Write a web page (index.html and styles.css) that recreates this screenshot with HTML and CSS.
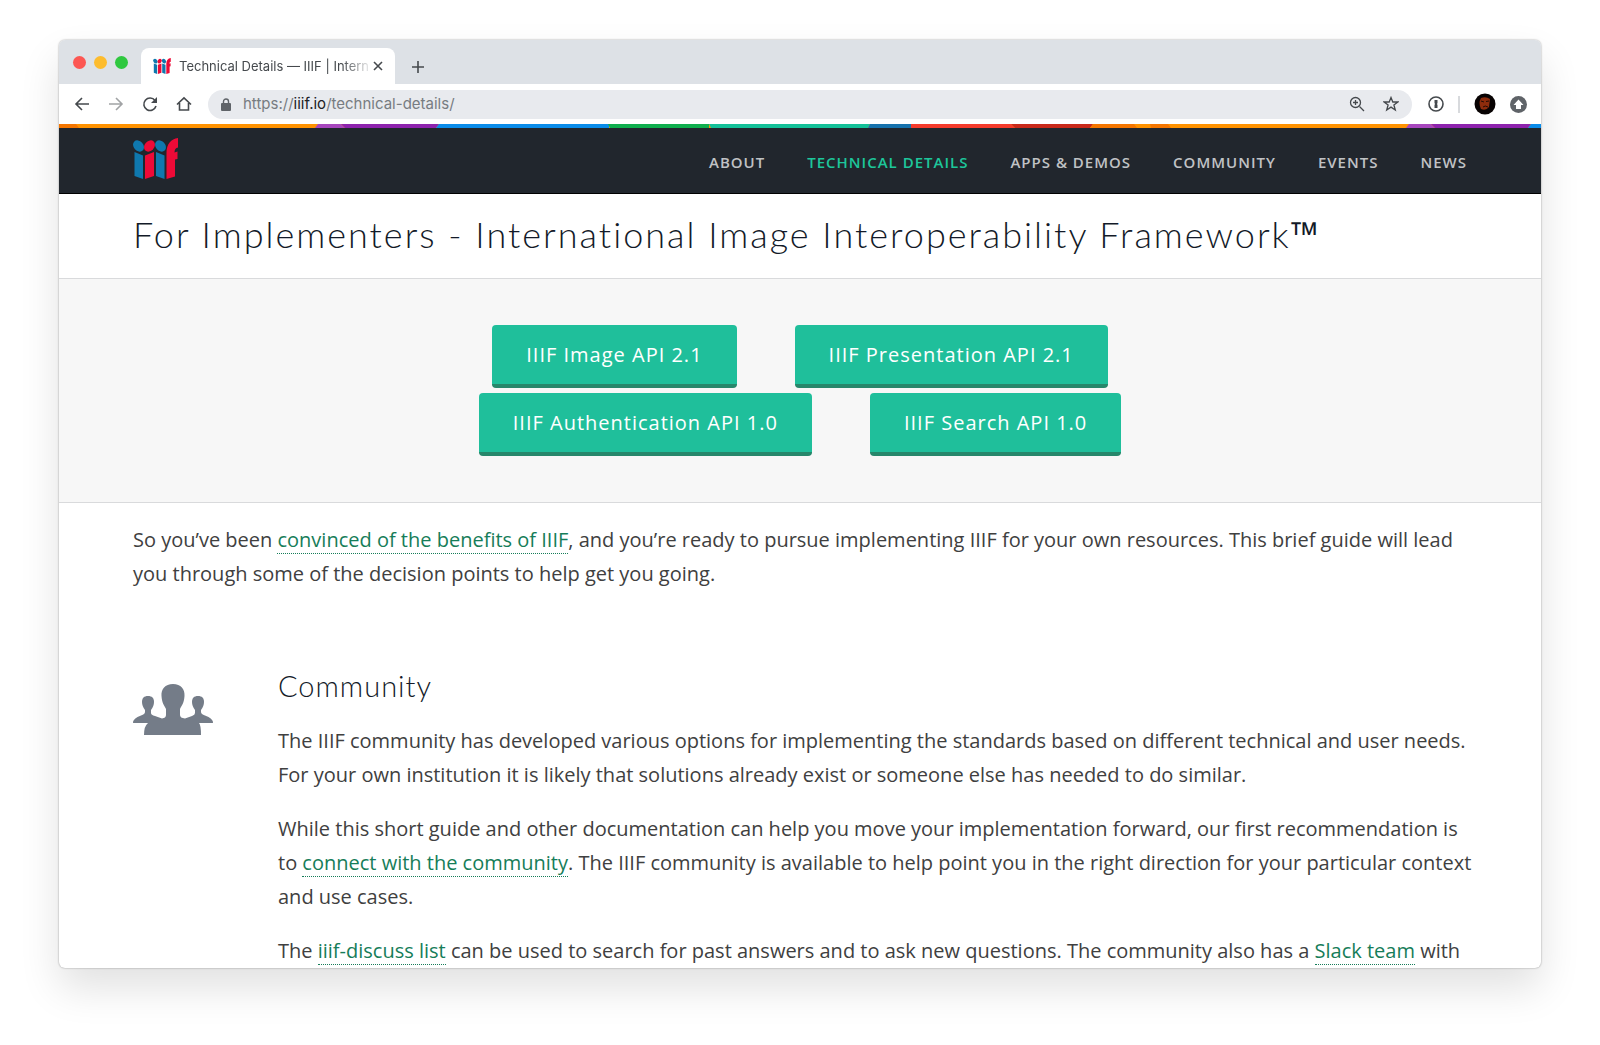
FILE: index.html
```html
<!DOCTYPE html>
<html lang="en">
<head>
<meta charset="utf-8">
<title>Technical Details — IIIF</title>
<link rel="stylesheet" href="styles.css">
</head>
<body>
<svg class="defs" aria-hidden="true">
  <symbol id="iiif" viewBox="0 0 45 41">
    <g fill="#0f78ae">
      <ellipse cx="5.500" cy="8" rx="6.200" ry="4.800" transform="rotate(48 5.500 8)"/>
      <path d="M1.500 14L10 17.500V41L1.500 38Z"/>
      <ellipse cx="27.500" cy="8" rx="6.200" ry="4.800" transform="rotate(48 27.500 8)"/>
      <path d="M23 14L31.500 17.500V41L23 38Z"/>
    </g>
    <g fill="#ee0a37">
      <ellipse cx="16.500" cy="8" rx="6.200" ry="4.800" transform="rotate(-48 16.500 8)"/>
      <path d="M12 17.500L21 14V38L12 41Z"/>
      <path d="M33.500 41V15C33.500 6 38 1 45 0V9.500Q41.500 10 41.500 14.500L44.500 13.500V21L42 21.500V38.500Z"/>
    </g>
  </symbol>
</svg>
<main class="window">
  <div class="tabstrip">
    <div class="lights"><span class="light red"></span><span class="light yellow"></span><span class="light green"></span></div>
    <div class="tab">
      <svg class="favicon" aria-hidden="true"><use href="#iiif"/></svg>
      <span class="tab-title">Technical Details — IIIF | Intern</span>
      <button class="icon-button" aria-label="Close tab"><svg width="10" height="10" viewBox="0 0 10 10"><path d="M1 1L9 9M9 1L1 9"/></svg></button>
    </div>
    <button class="icon-button add" aria-label="New tab"><svg width="14" height="14" viewBox="0 0 14 14"><path d="M7 1V13M1 7H13"/></svg></button>
  </div>
  <div class="toolbar">
    <div class="tools history">
      <button class="icon-button" aria-label="Back"><svg width="16" height="16" viewBox="0 0 16 16"><path d="M15 8H2M8 2L2 8L8 14"/></svg></button>
      <button class="icon-button faded" aria-label="Forward"><svg width="16" height="16" viewBox="0 0 16 16"><path d="M1 8H14M8 2L14 8L8 14"/></svg></button>
      <button class="icon-button" aria-label="Reload"><svg width="16" height="16" viewBox="0 0 16 16"><path d="M13 4.500A6.200 6.200 0 1 0 14 10"/><path class="solid" d="M15 1V7H9Z"/></svg></button>
      <button class="icon-button" aria-label="Home"><svg width="16" height="16" viewBox="0 0 16 16"><path d="M1 8.500L8 1.800L15 8.500M3.500 7V14H12.500V7"/></svg></button>
    </div>
    <div class="omnibox">
      <svg class="lock" width="10" height="13" viewBox="0 0 10 13" aria-hidden="true"><rect y="5" width="10" height="8" rx="1" fill="#5f6368"/><path d="M2.500 6V3.500a2.500 2.500 0 0 1 5 0V6" fill="none" stroke="#5f6368" stroke-width="1.400"/></svg>
      <a class="url" href="#top">https://<b>iiif.io</b>/technical-details/</a>
      <button class="icon-button thin" aria-label="Zoom"><svg width="16" height="16" viewBox="0 0 16 16"><circle cx="6.500" cy="6.500" r="5"/><path d="M10.500 10.500L15 15M4 6.500H9M6.500 4V9"/></svg></button>
      <button class="icon-button thin" aria-label="Bookmark"><svg width="16" height="16" viewBox="0 0 16 16"><path d="M8 1.500L9.800 6H14.800L10.900 9L12.300 14L8 11.100L3.700 14L5.100 9L1.200 6H6.200Z"/></svg></button>
    </div>
    <div class="tools">
      <button class="icon-button" aria-label="Password manager"><svg width="16" height="16" viewBox="0 0 16 16"><circle cx="8" cy="8" r="7"/><path class="solid" d="M6.500 4H9.500V7L9 8L9.500 9V12H6.500V9L7 8L6.500 7Z"/></svg></button>
      <span class="divider"></span>
      <button class="icon-button" aria-label="Profile"><svg width="22" height="22" viewBox="0 0 22 22"><circle cx="11" cy="11" r="10.500" fill="#080303" stroke="none"/><path d="M7 5Q12 3 16 6L15 14Q12 18 7 16Q4 10 7 5Z" fill="#8e2c0c" stroke="none"/><path d="M7 8L10 9M12 8.500L15 8M9 14Q11 12 14 14" stroke="#220a04" stroke-width="1"/></svg></button>
      <button class="icon-button" aria-label="Update"><svg width="17" height="17" viewBox="0 0 17 17"><circle cx="8.500" cy="8.500" r="8.500" fill="#5f6368" stroke="none"/><path d="M8.500 3.500L13.500 9H11V13H6V9H3.500Z" fill="#fff" stroke="none"/></svg></button>
    </div>
  </div>
  <svg class="stripe" viewBox="0 0 1482 4" preserveAspectRatio="none" aria-hidden="true">
    <path fill="#ff9200" d="M0 0H1482V4H0Z"/><path fill="#f57600" d="M0 0H17L20 4H0Z"/>
    <path fill="#a746bd" d="M259 0H282L286 4H256Z"/><path fill="#8d22ad" d="M282 0H380L377 4H286Z"/>
    <path fill="#0a8cea" d="M380 0H550V4H377Z"/><path fill="#0fae4d" d="M549 0H650V4H551Z"/>
    <path fill="#14c199" d="M650 0H811L809 4H652Z"/><path fill="#1672ad" d="M811 0H852V4H809Z"/>
    <path fill="#f53b2c" d="M852 0H952L956 4H852Z"/><path fill="#c9291a" d="M952 0H1034L1031 4H956Z"/>
    <path fill="#f57600" d="M1034 0H1075L1078 4H1031ZM1091 0H1109L1112 4H1092Z"/>
    <path fill="#a746bd" d="M1350 0H1372L1376 4H1347Z"/><path fill="#8d22ad" d="M1372 0H1472L1469 4H1376Z"/>
    <path fill="#0a8cea" d="M1472 0H1482V4H1469Z"/>
  </svg>
  <header class="site-header">
    <a class="logo" href="#top" aria-label="IIIF home"><svg width="45" height="41"><use href="#iiif"/></svg></a>
    <nav class="nav">
      <a href="#about">ABOUT</a><a class="active" href="#technical">TECHNICAL DETAILS</a><a href="#apps">APPS &amp; DEMOS</a><a href="#community">COMMUNITY</a><a href="#events">EVENTS</a><a href="#news">NEWS</a>
    </nav>
  </header>
  <h1 class="title" id="top">For Implementers - International Image Interoperability Framework<span class="tm">™</span></h1>
  <section class="apis">
    <div class="api-row"><button class="api">IIIF Image API 2.1</button><button class="api">IIIF Presentation API 2.1</button></div>
    <div class="api-row"><button class="api">IIIF Authentication API 1.0</button><button class="api">IIIF Search API 1.0</button></div>
  </section>
  <p class="intro">So you’ve been <a href="#benefits">convinced of the benefits of IIIF</a>, and you’re ready to pursue implementing IIIF for your own resources. This brief guide will lead you through some of the decision points to help get you going.</p>
  <section class="topic" id="community">
    <svg class="people" width="80" height="51" viewBox="0 0 80 51" aria-hidden="true" fill="#747c88">
      <path d="M40 0C48 0 52 5 51.500 12C51 19 49 21 47 25V31Q47 34 52 34.500L59 32Q62 31 62 29V26C60 23 59 21 59 18C59 14 61 12 65 12S71 14 71 18C71 21 70 23 68 26V28Q68 30 72 31.500Q80 34 80 39H66Q68 41 68 51H11Q11 42 15 39H0Q0 34 8 31.500Q12 30 12 28V26C10 23 9 21 9 18C9 14 11 12 15 12S21 14 21 18C21 21 20 23 18 26V29Q18 31 22 32L29 34.500Q33 34 33 31V25C31 21 29 19 28.500 12C28 5 32 0 40 0Z"/>
    </svg>
    <div class="copy">
      <h2>Community</h2>
      <p>The IIIF community has developed various options for implementing the standards based on different technical and user needs. For your own institution it is likely that solutions already exist or someone else has needed to do similar.</p>
      <p>While this short guide and other documentation can help you move your implementation forward, our first recommendation is to <a href="#connect">connect with the community</a>. The IIIF community is available to help point you in the right direction for your particular context and use cases.</p>
      <p>The <a href="#list">iiif-discuss list</a> can be used to search for past answers and to ask new questions. The community also has a <a href="#slack">Slack team</a> with</p>
    </div>
  </section>
</main>
</body>
</html>
```
FILE: styles.css
```css
* { box-sizing: border-box; }
body {
  margin: 0;
  padding: 40px 59px 78px;
  background: #fff;
  color: #404040;
  font: 20px/34px "Open Sans", sans-serif;
}
.defs { display: none; }
.window {
  overflow: hidden;
  border-radius: 6px;
  background: #fff;
  box-shadow: 0 0 2px rgba(0, 0, 0, 0.4), 0 20px 40px rgba(0, 0, 0, 0.12);
}
.tabstrip {
  display: flex;
  align-items: flex-end;
  height: 44px;
  padding-left: 14px;
  background: #dde1e6;
}
.lights { display: flex; gap: 8px; width: 68px; padding-bottom: 15px; }
.light { width: 13px; height: 13px; border-radius: 50%; }
.red { background: #fc5753; }
.yellow { background: #fdbc2e; }
.green { background: #2fc840; }
.tab {
  display: flex;
  align-items: center;
  width: 254px;
  height: 36px;
  padding: 0 12px;
  border-radius: 8px 8px 0 0;
  background: #fff;
}
.favicon { flex: none; width: 18px; height: 16px; margin-right: 8px; }
.tab-title {
  flex: 1;
  color: #45494d;
  font: 13px/20px Inter, sans-serif;
  white-space: nowrap;
  -webkit-mask-image: linear-gradient(90deg, #000 84%, transparent);
  mask-image: linear-gradient(90deg, #000 84%, transparent);
}
.icon-button {
  display: flex;
  flex: none;
  padding: 0;
  border: 0;
  background: none;
}
.icon-button svg { fill: none; stroke: #45494d; stroke-width: 1.6; }
.thin svg { stroke-width: 1.3; }
.icon-button .solid { fill: #45494d; stroke: none; }
.faded { opacity: 0.5; }
.add { margin: 0 0 10px 16px; }
.toolbar {
  display: flex;
  align-items: center;
  gap: 16px;
  height: 40px;
  padding: 0 14px 0 15px;
}
.tools { display: flex; align-items: center; gap: 14px; }
.history { gap: 18px; }
.omnibox {
  display: flex;
  flex: 1;
  align-items: center;
  gap: 18px;
  height: 29px;
  padding: 0 13px;
  border-radius: 15px;
  background: #e8eaee;
}
.lock { flex: none; }
.url {
  flex: 1;
  margin-left: -6px;
  color: #777c81;
  font: 15px/20px Inter, sans-serif;
  text-decoration: none;
}
.url b { color: #202124; font-weight: 400; }
.divider { width: 2px; height: 17px; background: #d8dadd; }
.stripe { display: block; width: 100%; height: 4px; }
.site-header {
  display: flex;
  align-items: center;
  justify-content: space-between;
  height: 66px;
  padding: 0 74px;
  border-bottom: 1px solid #000;
  background: #21262d;
}
.logo { display: flex; margin-bottom: 4px; }
.nav { display: flex; gap: 42px; padding-top: 2px; }
.nav a {
  color: #c0c2c5;
  font-size: 15px;
  font-weight: 600;
  line-height: 20px;
  letter-spacing: 1px;
  text-decoration: none;
}
.nav .active { color: #1dc69b; }
.title {
  margin: 0;
  padding: 15px 74px 18px;
  border-bottom: 1px solid #d9dadc;
  color: #131a28;
  font: 300 36px/50px Lato, sans-serif;
  letter-spacing: 2px;
  white-space: nowrap;
}
.tm { font-family: "Open Sans", sans-serif; font-weight: 400; }
.apis {
  display: flex;
  flex-direction: column;
  gap: 5px;
  padding: 46px 0;
  border-bottom: 1px solid #d9dadc;
  background: #f7f7f7;
}
.api-row { display: flex; justify-content: center; gap: 58px; }
.api {
  padding: 13px 34px 12px;
  border: 0;
  border-bottom: 4px solid #27876b;
  border-radius: 4px;
  background: #1fbf9b;
  color: #fff;
  font: 20px/34px "Open Sans", sans-serif;
  letter-spacing: 1px;
}
.intro { margin: 0; padding: 20px 74px 77px; }
p a { border-bottom: 1px dotted #167d59; color: #167d59; text-decoration: none; }
.topic { display: flex; gap: 65px; padding: 0 60px 0 74px; }
.people { flex: none; margin-top: 16px; }
.copy h2 {
  margin: 0 0 20px;
  color: #131a28;
  font: 300 29px/36px Lato, sans-serif;
  letter-spacing: 1px;
}
.copy p { margin: 0 0 20px; }
.copy p:last-child { margin: 0; }
```
